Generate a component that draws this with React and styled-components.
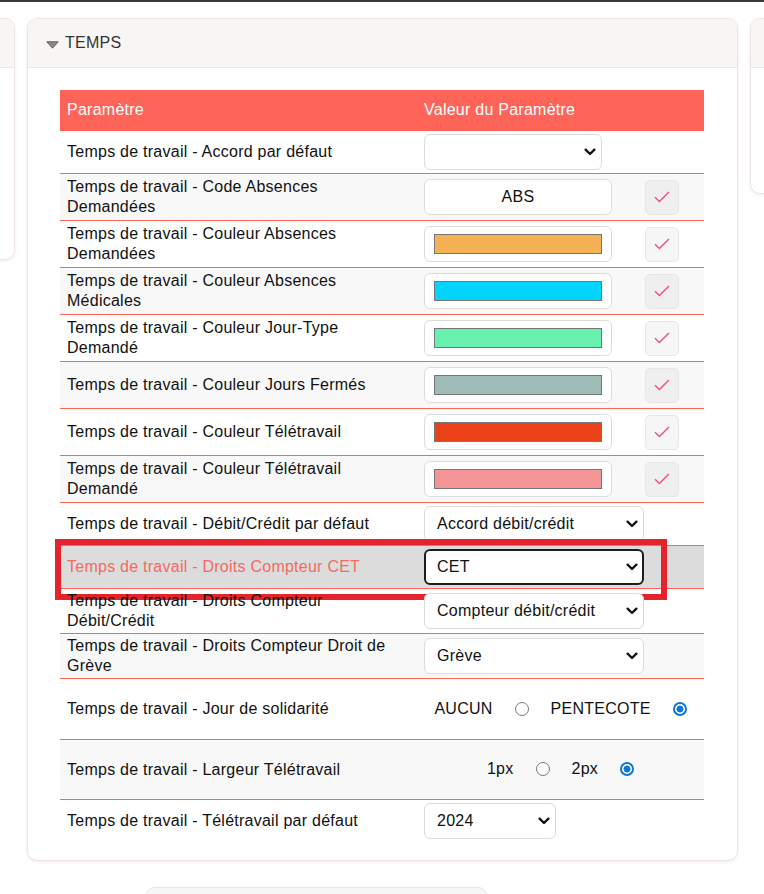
import React from 'react';
import styled, { createGlobalStyle } from 'styled-components';

const GlobalStyle = createGlobalStyle`
  html, body {
    margin: 0;
    padding: 0;
    overflow: hidden;
    background: #fff;
  }

  body {
    font-family: "Liberation Sans", Arial, sans-serif;
    font-size: 16px;
    letter-spacing: 0.25px;
    color: #111;
  }
`;

const TopBar = styled.div`
  height: 2px;
  background: #343a3e;
`;

const Page = styled.div`
  padding-top: 16px;
`;

const PanelRow = styled.div`
  display: flex;
  align-items: flex-start;
  gap: 12px;
  margin-left: -306px;
`;

const Panel = styled.section`
  flex: none;
  box-sizing: border-box;
  width: ${({ $width }) => $width}px;
  min-height: ${({ $minHeight }) => $minHeight || 0}px;
  background: #fff;
  border: 1px solid #efe4e4;
  border-radius: 10px;
  box-shadow: 0 1px 3px rgba(120, 90, 90, 0.12);
  overflow: hidden;
`;

const PanelHeader = styled.header`
  display: flex;
  align-items: center;
  gap: 6px;
  height: 49px;
  box-sizing: border-box;
  padding: 0 18px 0 18px;
  background: #f8f6f5;
  border-bottom: 1px solid #ede4e3;
  color: #333;
  font-size: 16px;
`;

const Caret = styled.svg`
  flex: none;
  margin-top: 4px;
`;

const PanelBody = styled.div`
  padding: 22px 33px 18px 32px;
`;

const Table = styled.table`
  width: 644px;
  table-layout: fixed;
  border-collapse: collapse;
  font-size: 16px;
  line-height: 20px;
`;

const HeadCell = styled.th`
  height: 40px;
  padding: 0 7px;
  background: #ff6459;
  color: #fff;
  font-weight: normal;
  text-align: left;
`;

const Row = styled.tr`
  border-top: 1px solid #ff6459;
  background: ${({ $active }) => ($active ? '#dcdcdc' : '#fff')};

  &:nth-child(even) {
    background: ${({ $active }) => ($active ? '#dcdcdc' : '#f8f8f8')};
  }
`;

const LabelCell = styled.td`
  position: relative;
  padding: ${({ $tall }) => ($tall ? '20px' : '2px')} 22px ${({ $tall }) => ($tall ? '19.5px' : '2px')} 7px;
  color: ${({ $active }) => ($active ? '#f36a60' : '#111')};
  vertical-align: middle;
`;

const ValueCell = styled.td`
  padding: 3px 7px;
  vertical-align: middle;
  text-align: ${({ $center }) => ($center ? 'center' : 'left')};
`;

const SelectBox = styled.div`
  position: relative;
  display: inline-block;
  width: ${({ $width }) => $width}px;
  vertical-align: middle;

  svg {
    position: absolute;
    right: 6px;
    top: 50%;
    margin-top: -4px;
    pointer-events: none;
  }
`;

const Select = styled.select`
  appearance: none;
  display: block;
  width: 100%;
  height: 36px;
  box-sizing: border-box;
  padding: 0 26px 0 ${({ $focused }) => ($focused ? 11 : 12)}px;
  border: ${({ $focused }) => ($focused ? '2px solid #1d1d1d' : '1px solid #dcdcdc')};
  border-radius: 6px;
  background: #fff;
  color: #111;
  font: inherit;
  letter-spacing: inherit;
  outline: none;
`;

const TextInput = styled.input`
  display: block;
  width: 188px;
  height: 36px;
  box-sizing: border-box;
  margin: 2px 0;
  border: 1px solid #dcdcdc;
  border-radius: 6px;
  background: #fff;
  color: #111;
  font: inherit;
  letter-spacing: inherit;
  text-align: center;
`;

const ColorInput = styled.input`
  display: block;
  width: 188px;
  height: 36px;
  box-sizing: border-box;
  margin: 2px 0;
  padding: 0;
  border: 1px solid #dcdcdc;
  border-radius: 6px;
  background: #fff;
  cursor: pointer;

  &::-webkit-color-swatch-wrapper {
    padding: 7px 9px;
  }

  &::-webkit-color-swatch {
    border: 1px solid #767676;
    border-radius: 0;
  }
`;

const SaveButton = styled.button`
  display: flex;
  align-items: center;
  justify-content: center;
  width: 34px;
  height: 35px;
  padding: 0;
  border: 1px solid #e6e6e6;
  border-radius: 5px;
  background: rgba(0, 0, 0, 0.035);
  cursor: pointer;
`;

const RadioGroup = styled.div`
  display: inline-flex;
  align-items: center;
  gap: 22px;
`;

const Radio = styled.input`
  appearance: none;
  flex: none;
  width: 14px;
  height: 14px;
  margin: 0;
  box-sizing: border-box;
  border: 1px solid #7a7a7a;
  border-radius: 50%;
  background: #fff;

  &:checked {
    border: 2px solid #0a78d4;
    background: radial-gradient(circle, #0a78d4 0 3.2px, #fff 3.8px);
  }
`;

const Highlight = styled.div`
  position: absolute;
  left: -5px;
  top: -7px;
  width: 612px;
  height: 61px;
  box-sizing: border-box;
  border: 6px solid #e4232a;
  pointer-events: none;
`;

const Footer = styled.div`
  padding: 26px 0 0 145px;
`;

const StubCard = styled.div`
  width: 343px;
  height: 40px;
  box-sizing: border-box;
  background: #f8f6f5;
  border: 1px solid #efe4e4;
  border-radius: 10px;
`;

const rows = [
  { label: 'Temps de travail - Accord par défaut', kind: 'select', width: 178, value: '' },
  { label: 'Temps de travail - Code Absences Demandées', kind: 'text', value: 'ABS' },
  { label: 'Temps de travail - Couleur Absences Demandées', kind: 'color', value: '#f4b153' },
  { label: 'Temps de travail - Couleur Absences Médicales', kind: 'color', value: '#00d4ff' },
  { label: 'Temps de travail - Couleur Jour-Type Demandé', kind: 'color', value: '#68f0ae' },
  { label: 'Temps de travail - Couleur Jours Fermés', kind: 'color', value: '#a0bcb6' },
  { label: 'Temps de travail - Couleur Télétravail', kind: 'color', value: '#ea4119' },
  { label: 'Temps de travail - Couleur Télétravail Demandé', kind: 'color', value: '#f39596' },
  { label: 'Temps de travail - Débit/Crédit par défaut', kind: 'select', width: 220, span: true, value: 'Accord débit/crédit' },
  { label: 'Temps de travail - Droits Compteur CET', kind: 'select', width: 220, span: true, value: 'CET', active: true },
  { label: 'Temps de travail - Droits Compteur Débit/Crédit', kind: 'select', width: 220, span: true, value: 'Compteur débit/crédit' },
  { label: 'Temps de travail - Droits Compteur Droit de Grève', kind: 'select', width: 220, span: true, value: 'Grève' },
  { label: 'Temps de travail - Jour de solidarité', kind: 'radio', name: 'solidarite', options: ['AUCUN', 'PENTECOTE'], checked: 1 },
  { label: 'Temps de travail - Largeur Télétravail', kind: 'radio', name: 'largeur', options: ['1px', '2px'], checked: 1 },
  { label: 'Temps de travail - Télétravail par défaut', kind: 'select', width: 132, span: true, value: '2024' },
];

const Chevron = () => (
  <svg width="12" height="8" viewBox="0 0 12 8">
    <path d="M1.6 1.6 6 6l4.4-4.4" fill="none" stroke="#111" strokeWidth="2.3" strokeLinecap="round" strokeLinejoin="round" />
  </svg>
);

const CheckMark = () => (
  <svg width="16" height="12" viewBox="0 0 16 12">
    <path d="M1 6.2 5.4 10.6 15 1" fill="none" stroke="#ef4f86" strokeWidth="1.4" />
  </svg>
);

const SelectField = ({ width, value, focused }) => (
  <SelectBox $width={width}>
    <Select $focused={focused} defaultValue={value}>
      <option value={value}>{value}</option>
    </Select>
    <Chevron />
  </SelectBox>
);

const ValueCells = ({ row }) => {
  if (row.kind === 'select') {
    const field = <SelectField width={row.width} value={row.value} focused={row.active} />;
    return row.span ? (
      <ValueCell colSpan={2}>{field}</ValueCell>
    ) : (
      <>
        <ValueCell>{field}</ValueCell>
        <ValueCell />
      </>
    );
  }

  if (row.kind === 'radio') {
    return (
      <ValueCell colSpan={2} $center>
        <RadioGroup>
          {row.options.map((opt, i) => (
            <React.Fragment key={opt}>
              <span>{opt}</span>
              <Radio type="radio" name={row.name} defaultChecked={i === row.checked} />
            </React.Fragment>
          ))}
        </RadioGroup>
      </ValueCell>
    );
  }

  return (
    <>
      <ValueCell>
        {row.kind === 'text' ? (
          <TextInput type="text" defaultValue={row.value} />
        ) : (
          <ColorInput type="color" defaultValue={row.value} />
        )}
      </ValueCell>
      <ValueCell>
        <SaveButton type="button">
          <CheckMark />
        </SaveButton>
      </ValueCell>
    </>
  );
};

const App = () => (
  <>
    <GlobalStyle />
    <TopBar />
    <Page>
      <PanelRow>
        <Panel $width={321} $minHeight={242}>
          <PanelHeader />
        </Panel>

        <Panel $width={711}>
          <PanelHeader>
            <Caret width="13" height="8" viewBox="0 0 13 8">
              <path d="M0.8 0.8h11.4L6.5 7.2z" fill="#8a8a8a" stroke="#555" strokeWidth="0.9" strokeLinejoin="round" />
            </Caret>
            TEMPS
          </PanelHeader>
          <PanelBody>
            <Table>
              <colgroup>
                <col style={{ width: 357 }} />
                <col style={{ width: 221 }} />
                <col style={{ width: 66 }} />
              </colgroup>
              <thead>
                <tr>
                  <HeadCell>Paramètre</HeadCell>
                  <HeadCell colSpan={2}>Valeur du Paramètre</HeadCell>
                </tr>
              </thead>
              <tbody>
                {rows.map((row) => (
                  <Row key={row.label} $active={row.active}>
                    <LabelCell $active={row.active} $tall={row.kind === 'radio'}>
                      {row.label}
                      {row.active && <Highlight />}
                    </LabelCell>
                    <ValueCells row={row} />
                  </Row>
                ))}
              </tbody>
            </Table>
          </PanelBody>
        </Panel>

        <Panel $width={320} $minHeight={176}>
          <PanelHeader />
        </Panel>
      </PanelRow>

      <Footer>
        <StubCard />
      </Footer>
    </Page>
  </>
);

export default App;
